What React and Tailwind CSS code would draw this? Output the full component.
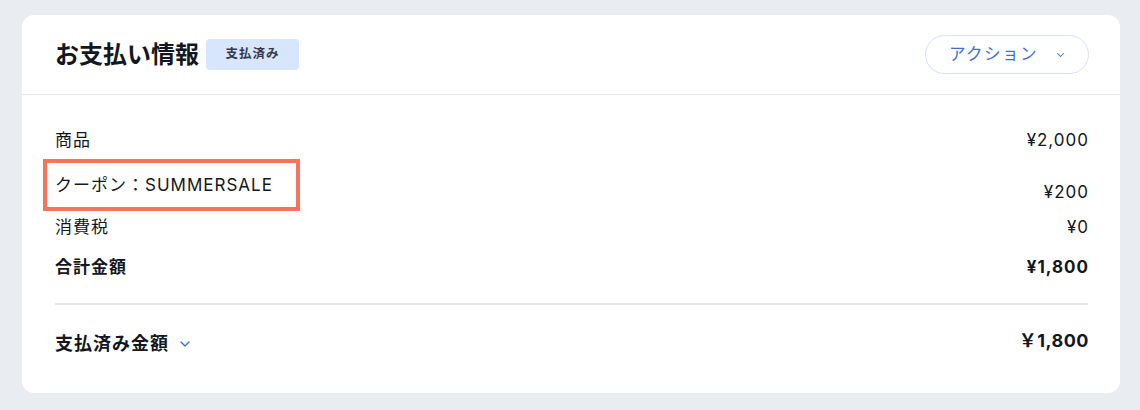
const font = { fontFamily: '"Inter", "Noto Sans CJK JP", sans-serif' };

function Chevron({ className }) {
  return (
    <svg viewBox="0 0 12 8" className={className} fill="none" stroke="currentColor" strokeWidth="1.4" strokeLinecap="round" strokeLinejoin="round">
      <path d="M2 2l4 4 4-4" />
    </svg>
  );
}

export default function App() {
  return (
    <div className="min-h-[410px] w-[1140px] bg-[#e9ecf1] pt-[15px] pl-[22px] text-[#131720]" style={font}>
      <div className="w-[1098px] h-[378px] rounded-[12px] bg-white flex flex-col">
        <div className="h-[80px] flex items-center justify-between pl-[33px] pr-[31px] border-b border-[#e3e6eb]">
          <div className="flex items-center gap-[7px]">
            <h1 className="text-[24px] font-bold leading-none">お支払い情報</h1>
            <span className="h-[31px] w-[93px] rounded-[4px] bg-[#d7e5fd] flex items-center justify-center text-[12.5px] font-semibold tracking-[1px] text-[#343a4d]">
              支払済み
            </span>
          </div>
          <button className="h-[39px] w-[164px] rounded-full border border-[#d6e2f6] flex items-center justify-center gap-[18px] text-[#3b71d6] text-[16.5px] tracking-[1.5px]">
            <span>アクション</span>
            <Chevron className="w-[9px] h-[6px]" />
          </button>
        </div>

        <div className="pr-[32px] pl-[33px] pt-[33px] text-[17px] tracking-[1px] leading-[24px]">
          <div className="flex justify-between h-6">
            <span>商品</span>
            <span className="-mr-[1px]">¥2,000</span>
          </div>
          <div className="flex justify-between items-end mt-[7px] h-[52px]">
            <span className="-ml-[12px] border-4 border-[#f7745a] pl-[8px] pr-[23px] py-[10px] h-[52px]">
              クーポン：SUMMERSALE
            </span>
            <span className="pb-[7px] -mr-[1px]">¥200</span>
          </div>
          <div className="flex justify-between mt-1 h-6">
            <span>消費税</span>
            <span className="-mr-[1px]">¥0</span>
          </div>
          <div className="flex justify-between mt-4 h-6 font-bold">
            <span>合計金額</span>
            <span className="-mr-[1px]">¥1,800</span>
          </div>
          <div className="mt-6 border-t-2 border-[#e3e6eb]" />
          <div className="flex justify-between items-center mt-[27px] h-6 font-bold">
            <span className="flex items-center gap-[10px] text-[18px]">
              支払済み金額
              <Chevron className="w-[12px] h-[8px] text-[#3b71d6]" />
            </span>
            <span className="-mt-[6px] -mr-[1px] text-[18px] tracking-[0.5px]">￥1,800</span>
          </div>
        </div>
      </div>
    </div>
  );
}
